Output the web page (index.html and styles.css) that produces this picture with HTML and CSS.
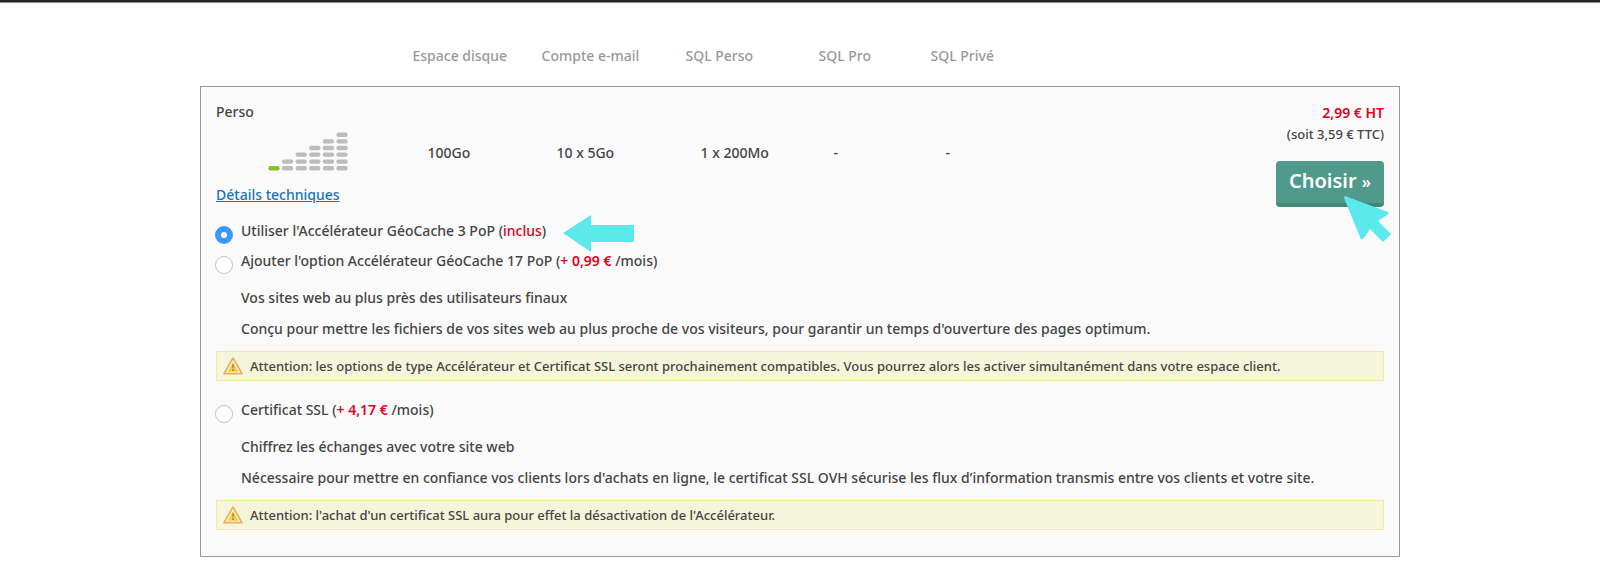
FILE: index.html
```html
<!DOCTYPE html>
<html lang="fr">
<head>
    <meta charset="UTF-8" />
    <meta name="viewport" content="width=device-width, initial-scale=1" />
    <title>Hébergement Perso</title>
    <link rel="stylesheet" href="styles.css">
</head>
<body>
    <div class="topbar"></div>
    <main class="container">
        <table class="offers">
            <colgroup>
                <col class="col-name">
                <col class="col-disk">
                <col class="col-mail">
                <col class="col-sql">
                <col class="col-pro">
                <col class="col-rest">
                <col class="col-price">
            </colgroup>
            <thead>
                <tr>
                    <td></td>
                    <th scope="col">Espace disque</th>
                    <th scope="col">Compte e-mail</th>
                    <th scope="col">SQL Perso</th>
                    <th scope="col">SQL Pro</th>
                    <th scope="col">SQL Privé</th>
                    <td></td>
                </tr>
            </thead>
            <tbody>
                <tr class="plan">
                    <td class="plan-name">
                        <div>Perso</div>
                        <svg class="bars" viewBox="232 306 241 116" width="80" height="39" aria-hidden="true">
                            <defs>
                                <rect id="bar" width="34" height="13" rx="6" />
                            </defs>
                            <use href="#bar" x="233" y="408" fill="#8cbf26" />
                            <g fill="#bcbcbc">
                                <use href="#bar" x="274" y="408" /><use href="#bar" x="274" y="388" />
                                <use href="#bar" x="315" y="408" /><use href="#bar" x="315" y="388" /><use href="#bar" x="315" y="367" />
                                <use href="#bar" x="356" y="408" /><use href="#bar" x="356" y="388" /><use href="#bar" x="356" y="367" /><use href="#bar" x="356" y="347" />
                                <use href="#bar" x="397" y="408" /><use href="#bar" x="397" y="388" /><use href="#bar" x="397" y="367" /><use href="#bar" x="397" y="347" /><use href="#bar" x="397" y="327" />
                                <use href="#bar" x="438" y="408" /><use href="#bar" x="438" y="388" /><use href="#bar" x="438" y="367" /><use href="#bar" x="438" y="347" /><use href="#bar" x="438" y="327" /><use href="#bar" x="438" y="307" />
                            </g>
                        </svg>
                        <a href="#details">Détails techniques</a>
                    </td>
                    <td class="value">100Go</td>
                    <td class="value">10 x 5Go</td>
                    <td class="value">1 x 200Mo</td>
                    <td class="value">-</td>
                    <td class="value">-</td>
                    <td class="plan-price">
                        <div class="price">2,99 € HT</div>
                        <div class="price-ttc">(soit 3,59 € TTC)</div>
                        <div class="choose">
                            <button type="button">Choisir <span>»</span></button>
                            <svg class="cursor" viewBox="0 0 48 48" width="48" height="48" aria-hidden="true">
                                <path d="M1 1 L44 17 Q45 19 43 20 L34 26 L47 39 L39 47 L26 34 L20 43 Q17 46 16 42 L0 3 Z" fill="#5ce9ec" />
                            </svg>
                        </div>
                    </td>
                </tr>
                <tr>
                    <td class="options" colspan="7">
                        <div class="option">
                            <input type="radio" name="option" id="geo3" checked>
                            <label for="geo3">Utiliser l'Accélérateur GéoCache 3 PoP (<span class="red">inclus</span>)</label>
                            <svg class="arrow" viewBox="0 0 71 37" width="71" height="37" aria-hidden="true">
                                <path d="M0 18 L28 0 V10 H71 V27 H28 V37 Z" fill="#5ce9ec" />
                            </svg>
                        </div>
                        <div class="option">
                            <input type="radio" name="option" id="geo17">
                            <label for="geo17">Ajouter l'option Accélérateur GéoCache 17 PoP (<span class="red strong">+ 0,99 €</span> /mois)</label>
                        </div>
                        <div class="description">
                            <p>Vos sites web au plus près des utilisateurs finaux</p>
                            <p>Conçu pour mettre les fichiers de vos sites web au plus proche de vos visiteurs, pour garantir un temps d'ouverture des pages optimum.</p>
                        </div>
                        <div class="warning">
                            <svg viewBox="0 0 60 54" width="20" height="18" aria-hidden="true">
                                <path d="M30 3 L57 50 H3 Z" fill="#fdf3d0" stroke="#e9b060" stroke-width="5" stroke-linejoin="round" />
                                <path d="M30 16 L46 44 H14 Z" fill="#f3cf4a" />
                                <path d="M27 22 H33 L32 34 H28 Z M27 37 H33 V42 H27 Z" fill="#b88a2a" />
                            </svg>
                            <span>Attention: les options de type Accélérateur et Certificat SSL seront prochainement compatibles. Vous pourrez alors les activer simultanément dans votre espace client.</span>
                        </div>
                        <div class="option">
                            <input type="radio" name="option" id="ssl">
                            <label for="ssl">Certificat SSL (<span class="red strong">+ 4,17 €</span> /mois)</label>
                        </div>
                        <div class="description">
                            <p>Chiffrez les échanges avec votre site web</p>
                            <p>Nécessaire pour mettre en confiance vos clients lors d'achats en ligne, le certificat SSL OVH sécurise les flux d’information transmis entre vos clients et votre site.</p>
                        </div>
                        <div class="warning">
                            <svg viewBox="0 0 60 54" width="20" height="18" aria-hidden="true">
                                <path d="M30 3 L57 50 H3 Z" fill="#fdf3d0" stroke="#e9b060" stroke-width="5" stroke-linejoin="round" />
                                <path d="M30 16 L46 44 H14 Z" fill="#f3cf4a" />
                                <path d="M27 22 H33 L32 34 H28 Z M27 37 H33 V42 H27 Z" fill="#b88a2a" />
                            </svg>
                            <span>Attention: l'achat d'un certificat SSL aura pour effet la désactivation de l'Accélérateur.</span>
                        </div>
                    </td>
                </tr>
            </tbody>
        </table>
    </main>
</body>
</html>
```

FILE: styles.css
```css
body {
    margin: 0;
    background: #fff;
    color: #444;
    font-family: "Trebuchet MS", "Noto Sans", sans-serif;
    font-size: 14px;
    font-weight: 500;
    line-height: 20px;
}
.topbar {
    height: 2px;
    background: #252324;
    border-bottom: 1px solid #8c8a8b;
}
.container {
    width: 75%;
    margin: 0 auto;
    padding: 43px 0 15px;
}
.offers {
    width: 100%;
    table-layout: fixed;
    border-collapse: collapse;
}
.offers td,
.offers th {
    padding: 0;
    text-align: left;
}
.offers th {
    padding-bottom: 20px;
    color: #999;
    font-weight: 500;
}
.offers tbody {
    border: 1px solid #999;
    background: #fafafa;
}
.col-name { width: 212px; }
.col-disk { width: 129px; }
.col-mail { width: 144px; }
.col-sql { width: 133px; }
.col-pro { width: 112px; }
.col-price { width: 140px; }
.offers .value {
    padding: 10px 0 0 15px;
}
.offers .plan-name {
    padding: 15px 0 4px 15px;
}
.bars {
    display: block;
    margin: 10px 0 14px 52px;
}
a {
    color: #1a73b8;
}
.offers .plan-price {
    padding: 16px 15px 0 0;
    text-align: right;
    vertical-align: top;
}
.price {
    color: #e2001a;
    font-weight: 600;
}
.price-ttc {
    margin-top: 1px;
    font-size: 13px;
}
.choose {
    position: relative;
    margin-top: 17px;
}
button {
    width: 108px;
    height: 46px;
    padding: 0 0 4px;
    border: none;
    border-bottom: 4px solid #428876;
    border-radius: 4px;
    background: #4f9a8a;
    color: #fff;
    font-family: inherit;
    font-size: 20px;
    font-weight: 600;
    cursor: pointer;
}
button span {
    font-size: 16px;
}
.cursor {
    position: absolute;
    top: 34px;
    right: -8px;
}
.offers .options {
    padding: 7px 15px 26px;
}
.option {
    display: flex;
    align-items: center;
    height: 30px;
}
.option input {
    appearance: none;
    box-sizing: border-box;
    width: 18px;
    height: 18px;
    margin: 8px 8px 0 -1px;
    border: 1px solid #c4c4c4;
    border-radius: 50%;
    background: #fff;
}
.option input:checked {
    border: 6px solid #3b99fc;
}
.arrow {
    margin: 4px 0 0 17px;
}
.red {
    color: #e2001a;
}
.strong {
    font-weight: 600;
}
.description {
    padding: 12px 0 12px 25px;
}
.description p {
    margin: 0 0 11px;
}
.description p:last-child {
    margin: 0;
}
.warning {
    display: flex;
    align-items: center;
    gap: 7px;
    margin-bottom: 14px;
    padding: 4px 6px;
    border: 1px solid #f2e8a0;
    background: #f5f5dc;
    font-size: 13px;
}
.warning:last-child {
    margin-bottom: 0;
}
```
